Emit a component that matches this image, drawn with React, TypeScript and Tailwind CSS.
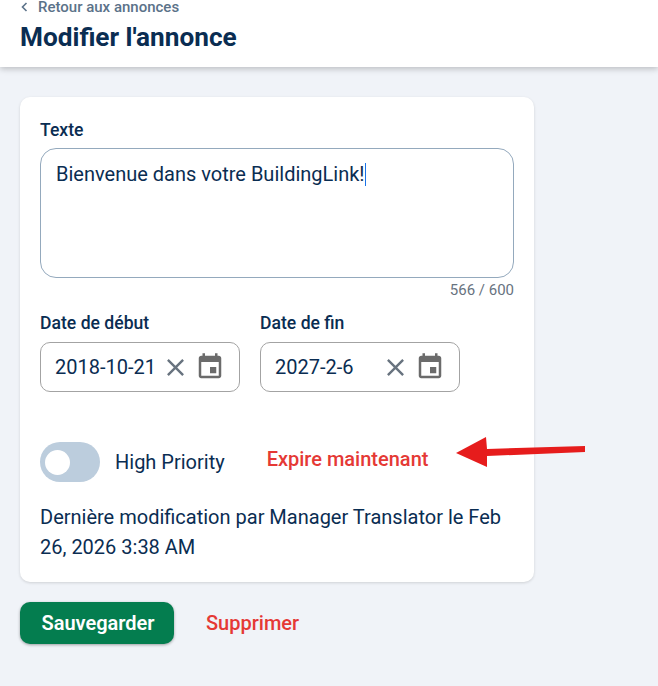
function ClearIcon() {
  return (
    <svg width="29" height="29" viewBox="0 0 24 24" fill="#68737f" className="shrink-0">
      <path d="M19 6.41 17.59 5 12 10.59 6.41 5 5 6.41 10.59 12 5 17.59 6.41 19 12 13.41 17.59 19 19 17.59 13.41 12z" />
    </svg>
  );
}

function CalendarIcon() {
  return (
    <svg width="30" height="30" viewBox="0 0 24 24" fill="#6b6b6b" className="shrink-0">
      <path d="M17 12h-5v5h5v-5zM16 1v2H8V1H6v2H5c-1.11 0-1.99.9-1.99 2L3 19c0 1.1.89 2 2 2h14c1.1 0 2-.9 2-2V5c0-1.1-.9-2-2-2h-1V1h-2zm3 18H5V8h14v11z" />
    </svg>
  );
}

function DateField({ label, value }: { label: string; value: string }) {
  return (
    <div className="w-[200px]">
      <div className="pt-px text-[17.6px] leading-[26px] font-medium text-[#0a2d52]">{label}</div>
      <div className="mt-[6px] flex h-[50px] items-center rounded-[10px] border border-[#a3a3a3] pl-[14px]">
        <span className="w-[106px] text-[20px] text-[#0a2d52] whitespace-nowrap">{value}</span>
        <span className="w-[29px]"><ClearIcon /></span>
        <span className="ml-[5px]"><CalendarIcon /></span>
      </div>
    </div>
  );
}

export default function App() {
  return (
    <div className="relative h-[686px] w-[658px] overflow-hidden bg-[#f0f3f8] font-['Roboto',sans-serif] text-[#0a2d52]">
      <header className="h-[67px] bg-white pl-5 shadow-[0_2px_6px_rgba(0,0,0,0.22)]">
        <div className="flex h-[14px] items-center gap-[10px] text-[15px] font-medium text-[#5b7289]">
          <svg width="7" height="10" viewBox="0 0 7 10" fill="none" stroke="#5b7289" strokeWidth="1.6" className="ml-[1px]">
            <path d="M5.5 1 1.5 5l4 4" />
          </svg>
          <span>Retour aux annonces</span>
        </div>
        <h1 className="mt-[5px] text-[26.2px] leading-[36px] font-bold text-[#0a2d52]">Modifier l'annonce</h1>
      </header>

      <main className="px-5 pt-[30px]">
        <section className="w-[514px] rounded-[10px] bg-white px-5 pt-[21px] pb-[20px] shadow-[0_1px_3px_rgba(0,0,0,0.14)]">
          <div className="text-[17.6px] leading-[24px] font-medium">Texte</div>
          <div className="mt-[6px] h-[130px] rounded-[16px] border border-[#94a9bd] px-[15px] pt-[9px] text-[20px] leading-[30px]">
            Bienvenue dans votre BuildingLink!<span className="inline-block h-[23px] w-px translate-y-[5px] bg-[#1a73e8]"></span>
          </div>
          <div className="mt-[3px] text-right text-[15px] leading-[18px] text-[#68737f]">566 / 600</div>

          <div className="mt-[10px] flex gap-5">
            <DateField label="Date de début" value="2018-10-21" />
            <DateField label="Date de fin" value="2027-2-6" />
          </div>

          <div className="mt-[50px] flex items-center">
            <div className="flex h-10 w-[60px] items-center rounded-full bg-[#bccddd] pl-[5px]">
              <div className="size-[25px] rounded-full bg-white"></div>
            </div>
            <span className="ml-[15px] text-[20px]">High Priority</span>
            <span className="ml-[42px] -translate-y-[3px] text-[20px] font-medium text-[#e53935]">Expire maintenant</span>
          </div>

          <p className="mt-[20px] text-[20px] leading-[30px]">
            Dernière modification par Manager Translator le Feb 26, 2026 3:38 AM
          </p>
        </section>

        <div className="mt-5 flex items-center">
          <button className="h-[42px] w-[154px] rounded-[10px] bg-[#047d4f] pl-[2px] text-[20px] font-semibold text-white shadow-[0_1px_3px_rgba(0,0,0,0.35)]">
            Sauvegarder
          </button>
          <button className="ml-8 text-[20px] font-medium text-[#e53935]">Supprimer</button>
        </div>
      </main>

      <svg width="140" height="40" viewBox="0 0 140 40" className="absolute left-[452px] top-[434px]">
        <path d="M4 19 34 3 35 15 133 12 133 18 35 22 35 33Z" fill="#e61c1c" />
      </svg>
    </div>
  );
}
